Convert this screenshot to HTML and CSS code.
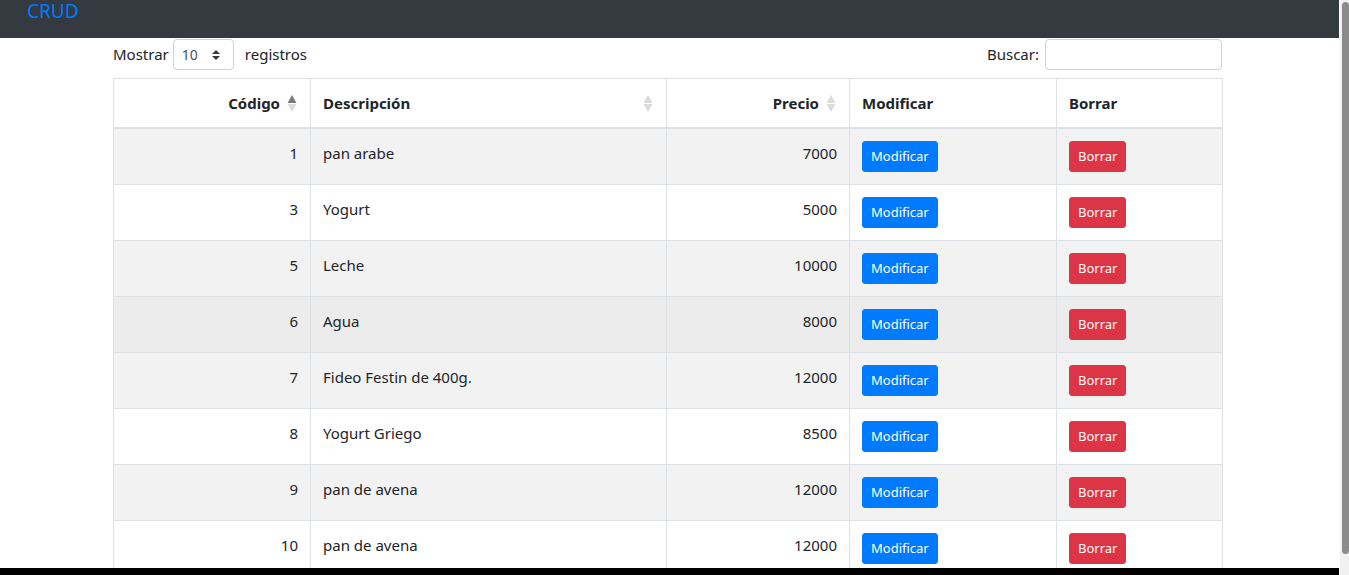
FILE: index.html
```html
<!DOCTYPE html>
<html lang="es">
<head>
<meta charset="utf-8">
<title>CRUD</title>
<link rel="stylesheet" href="styles.css">
</head>
<body>
<div class="screen">
  <div class="page">
    <nav class="navbar"><span class="brand">CRUD</span></nav>
    <main class="content">
      <div class="controls">
        <label class="length">Mostrar
          <span class="select"><span class="select-val">10</span>
            <svg class="select-arrows" width="8" height="10" viewBox="0 0 8 10"><path d="M4 0 L8 4 H0 Z M0 6 H8 L4 10 Z" fill="#343a40"/></svg>
          </span>
          <span class="length-after">registros</span>
        </label>
        <label class="search">Buscar: <span class="search-input"></span></label>
      </div>
      <table class="grid">
        <colgroup>
          <col class="c1"><col class="c2"><col class="c3"><col class="c4"><col class="c5">
        </colgroup>
        <thead>
          <tr>
            <th class="num sortable">Código<svg class="sort" width="10" height="17" viewBox="0 0 10 17"><path d="M5 0 L9.5 8 H0.5 Z" fill="#7a7a7a"/><path d="M0.5 9 H9.5 L5 17 Z" fill="#dcdcdc"/></svg></th>
            <th class="sortable">Descripción<svg class="sort" width="10" height="17" viewBox="0 0 10 17"><path d="M5 0 L9.5 8 H0.5 Z" fill="#dcdcdc"/><path d="M0.5 9 H9.5 L5 17 Z" fill="#dcdcdc"/></svg></th>
            <th class="num sortable">Precio<svg class="sort" width="10" height="17" viewBox="0 0 10 17"><path d="M5 0 L9.5 8 H0.5 Z" fill="#dcdcdc"/><path d="M0.5 9 H9.5 L5 17 Z" fill="#dcdcdc"/></svg></th>
            <th>Modificar</th>
            <th>Borrar</th>
          </tr>
        </thead>
        <tbody>
          <tr class="odd"><td class="num">1</td><td>pan arabe</td><td class="num">7000</td><td><span class="btn blue">Modificar</span></td><td><span class="btn red">Borrar</span></td></tr>
          <tr><td class="num">3</td><td>Yogurt</td><td class="num">5000</td><td><span class="btn blue">Modificar</span></td><td><span class="btn red">Borrar</span></td></tr>
          <tr class="odd"><td class="num">5</td><td>Leche</td><td class="num">10000</td><td><span class="btn blue">Modificar</span></td><td><span class="btn red">Borrar</span></td></tr>
          <tr class="hover"><td class="num">6</td><td>Agua</td><td class="num">8000</td><td><span class="btn blue">Modificar</span></td><td><span class="btn red">Borrar</span></td></tr>
          <tr class="odd"><td class="num">7</td><td>Fideo Festin de 400g.</td><td class="num">12000</td><td><span class="btn blue">Modificar</span></td><td><span class="btn red">Borrar</span></td></tr>
          <tr><td class="num">8</td><td>Yogurt Griego</td><td class="num">8500</td><td><span class="btn blue">Modificar</span></td><td><span class="btn red">Borrar</span></td></tr>
          <tr class="odd"><td class="num">9</td><td>pan de avena</td><td class="num">12000</td><td><span class="btn blue">Modificar</span></td><td><span class="btn red">Borrar</span></td></tr>
          <tr><td class="num">10</td><td>pan de avena</td><td class="num">12000</td><td><span class="btn blue">Modificar</span></td><td><span class="btn red">Borrar</span></td></tr>
        </tbody>
      </table>
    </main>
    <div class="bottom-bar"></div>
  </div>
  <div class="scrollbar"><div class="thumb"></div></div>
</div>
</body>
</html>
```

FILE: styles.css
```css
* { box-sizing: border-box; }
html, body { margin: 0; padding: 0; height: 100%; overflow: hidden; }
body {
  font-family: "Noto Sans", "Open Sans", "Liberation Sans", sans-serif;
  font-size: 16px;
  line-height: 1.5;
  color: #212529;
  background: #fff;
}
.screen { display: flex; width: 1349px; height: 575px; }
.page { flex: 0 0 1339px; display: flex; flex-direction: column; height: 575px; overflow: hidden; }
.navbar {
  flex: 0 0 38px;
  background: #343a40;
  padding: 0 0 0 27px;
}
.brand {
  display: block;
  color: #007bff;
  font-size: 19px;
  line-height: 22px;
  margin-top: 0;
}
.content { flex: 1 1 auto; padding: 1px 0 0 113px; overflow: hidden; }
.controls {
  width: 1109px;
  display: flex;
  justify-content: space-between;
  align-items: center;
  height: 31px;
}
.length, .search { display: flex; align-items: center; font-size: 15px; }
.select {
  margin-left: 4px;
  width: 61px;
  height: 31px;
  border: 1px solid #ced4da;
  border-radius: 4px;
  display: flex;
  align-items: center;
  justify-content: space-between;
  padding: 0 13px 0 8px;
  font-size: 14px;
}
.select-val { color: #495057; }
.length-after { margin-left: 11px; }
.search-input {
  margin-left: 6px;
  width: 177px;
  height: 31px;
  border: 1px solid #ced4da;
  border-radius: 4px;
}
.grid {
  margin-top: 8px;
  width: 1109px;
  border-collapse: collapse;
  table-layout: fixed;
}
.c1 { width: 197px; }
.c2 { width: 356px; }
.c3 { width: 183px; }
.c4 { width: 207px; }
.c5 { width: 166px; }
.grid th, .grid td {
  border: 1px solid #dee2e6;
  padding: 12px;
  text-align: left;
  vertical-align: top;
}
.grid th {
  font-weight: 700;
  font-size: 15px;
  line-height: 24px;
  border-bottom: 2px solid #dee2e6;
  padding: 12px;
}
.grid th.sortable { position: relative; padding-right: 30px; }
.grid th.num, .grid td.num { text-align: right; }
.sort { position: absolute; right: 13px; top: 16px; }
.grid td { font-size: 15px; line-height: 24px; }
tr.odd td { background: #f2f2f2; }
tr.hover td { background: #ececec; }
.btn {
  display: inline-block;
  vertical-align: top;
  font-size: 13px;
  line-height: 21px;
  height: 31px;
  padding: 4px 8px;
  border-radius: 3px;
  color: #fff;
  border: 1px solid transparent;
}
.btn.blue { background: #007bff; border-color: #007bff; }
.btn.red { background: #dc3545; border-color: #dc3545; }
.bottom-bar { flex: 0 0 7px; background: #000; }
.scrollbar { flex: 0 0 10px; background: #f1f1f1; padding: 2px 0 0 2px; height: 575px; border-left: 1px solid #fff; }
.thumb { width: 7px; height: 552px; background: #8b8b8b; border-radius: 4px; }
```
